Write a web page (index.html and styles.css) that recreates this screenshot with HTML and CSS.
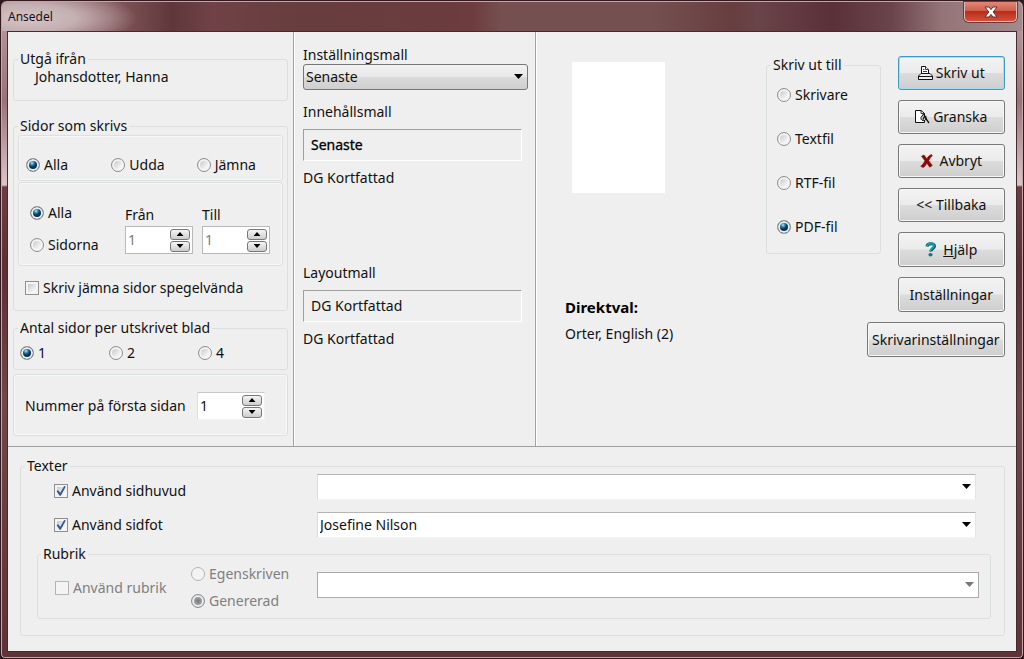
FILE: index.html
```html
<!DOCTYPE html>
<html lang="sv">
<head>
<meta charset="utf-8">
<title>Ansedel</title>
<link rel="stylesheet" href="styles.css">
</head>
<body>
<form class="window">
  <header class="titlebar">
    <h1 class="title">Ansedel</h1>
    <button type="button" class="close" aria-label="Stäng">
      <svg width="14" height="12" viewBox="0 0 14 12"><path d="M1 1h4l2 2.600L9 1h4L9.200 6 13 11H9L7 8.400 5 11H1l3.800-5z" fill="#fff" stroke="#5a3038" stroke-width="1"/></svg>
    </button>
  </header>
  <main class="client">
    <div class="upper">
      <section class="pane pages">
        <fieldset class="group source">
          <legend>Utgå ifrån</legend>
          <p>Johansdotter, Hanna</p>
        </fieldset>
        <fieldset class="group printed">
          <legend>Sidor som skrivs</legend>
          <div class="group parity">
            <label class="option"><input type="radio" name="parity" checked>Alla</label>
            <label class="option"><input type="radio" name="parity">Udda</label>
            <label class="option"><input type="radio" name="parity">Jämna</label>
          </div>
          <div class="group range">
            <div class="range-options">
              <label class="option"><input type="radio" name="range" checked>Alla</label>
              <label class="option"><input type="radio" name="range">Sidorna</label>
            </div>
            <div class="range-field">
              <label for="from">Från</label>
              <div class="spinner"><input id="from" type="number" value="1" disabled><div class="steps"><button type="button" class="step up" aria-label="Öka"></button><button type="button" class="step down" aria-label="Minska"></button></div></div>
            </div>
            <div class="range-field">
              <label for="to">Till</label>
              <div class="spinner"><input id="to" type="number" value="1" disabled><div class="steps"><button type="button" class="step up" aria-label="Öka"></button><button type="button" class="step down" aria-label="Minska"></button></div></div>
            </div>
          </div>
          <label class="option mirror"><input type="checkbox">Skriv jämna sidor spegelvända</label>
        </fieldset>
        <fieldset class="group sheets">
          <legend>Antal sidor per utskrivet blad</legend>
          <div class="sheet-options">
            <label class="option"><input type="radio" name="sheets" checked>1</label>
            <label class="option"><input type="radio" name="sheets">2</label>
            <label class="option"><input type="radio" name="sheets">4</label>
          </div>
        </fieldset>
        <div class="group first">
          <label for="first">Nummer på första sidan</label>
          <div class="spinner plain"><input id="first" type="number" value="1"><div class="steps"><button type="button" class="step up" aria-label="Öka"></button><button type="button" class="step down" aria-label="Minska"></button></div></div>
        </div>
      </section>

      <section class="pane templates">
        <label for="template">Inställningsmall</label>
        <div class="combo raised"><select id="template"><option>Senaste</option></select></div>
        <h2 class="heading">Innehållsmall</h2>
        <p class="sunken strong">Senaste</p>
        <p class="current">DG Kortfattad</p>
        <h2 class="heading layout">Layoutmall</h2>
        <p class="sunken">DG Kortfattad</p>
        <p class="current">DG Kortfattad</p>
      </section>

      <section class="pane output">
        <div class="preview">
          <div class="paper"></div>
          <h2 class="quick">Direktval:</h2>
          <p>Orter, English (2)</p>
        </div>
        <fieldset class="group target">
          <legend>Skriv ut till</legend>
          <div class="targets">
            <label class="option"><input type="radio" name="target">Skrivare</label>
            <label class="option"><input type="radio" name="target">Textfil</label>
            <label class="option"><input type="radio" name="target">RTF-fil</label>
            <label class="option"><input type="radio" name="target" checked>PDF-fil</label>
          </div>
        </fieldset>
        <div class="actions">
          <button type="submit" class="button default"><svg width="15" height="15" viewBox="0 0 15 15" fill="#fff" stroke="#111"><path d="M3.500 8.500V.5h4l3 3v5z"/><path d="M7.500.5v3h3M5 3.500h1.500M5 5.500h4" stroke-width=".8"/><path d="M3 7.500L.5 10v3.500h14V10L12 7.500z" fill="#eee"/><path d="M.5 10.500h14M4 7.500h7"/></svg>Skriv ut</button>
          <button type="button" class="button"><svg width="15" height="15" viewBox="0 0 15 15" fill="none" stroke="#111"><path fill="#fff" d="M.5.500h5.500l3.500 3v9h-9z"/><path d="M6 .5v3h3.500" stroke-width=".8"/><path d="M8.500 4L6 7.500c-1 3 4 4.500 5 1.500z" fill="#c5cccc"/><path d="M8 9.500l2-4M10.500 6l1 3.500 2.500 3.500" stroke-width="1.300"/></svg>Granska</button>
          <button type="button" class="button"><svg class="wide" width="13" height="14" viewBox="0 0 13 14"><path d="M1.500 2.200L4 1l2.800 3.700C8.200 2.500 9.500 1.200 11.500.5l.8 1.300C10.800 3 9.600 4.700 8.700 6.700l3.600 4.800-2.600 1.700-2.800-4C5.500 11.300 4.400 13 3.200 13.500L.7 12.300C2.500 11 4 9 4.900 6.800z" fill="#8b0808" stroke="#8b0808" stroke-width=".6"/></svg>Avbryt</button>
          <button type="button" class="button">&lt;&lt; Tillbaka</button>
          <button type="button" class="button"><svg class="wide" width="12" height="15" viewBox="0 0 12 15"><path d="M2 4.500C2.300 1 9.500.8 9.500 4.200c0 2.300-3.500 2.400-3.700 5.300" fill="none" stroke="#075a68" stroke-width="3"/><path d="M2 4C2.500.8 9 .6 9 3.800c0 2.200-3.500 2.500-3.700 5.200" fill="none" stroke="#12a0ae" stroke-width="1.800"/><ellipse cx="5.500" cy="12.800" rx="2.100" ry="1.700" fill="#087987"/></svg><span><u>H</u>jälp</span></button>
          <button type="button" class="button">Inställningar</button>
          <button type="button" class="button long">Skrivarinställningar</button>
        </div>
      </section>
    </div>

    <section class="lower">
      <fieldset class="group texts">
        <legend>Texter</legend>
        <div class="text-row head">
          <label class="option"><input type="checkbox" checked>Använd sidhuvud</label>
          <div class="combo"><select aria-label="Sidhuvud"><option></option></select></div>
        </div>
        <div class="text-row">
          <label class="option"><input type="checkbox" checked>Använd sidfot</label>
          <div class="combo"><select aria-label="Sidfot"><option>Josefine Nilson</option></select></div>
        </div>
        <fieldset class="group title-group" disabled>
          <legend>Rubrik</legend>
          <div class="title-row">
            <label class="option"><input type="checkbox">Använd rubrik</label>
            <div class="title-kinds">
              <label class="option"><input type="radio" name="kind">Egenskriven</label>
              <label class="option"><input type="radio" name="kind" checked>Genererad</label>
            </div>
            <div class="combo off"><select aria-label="Rubrik"><option></option></select></div>
          </div>
        </fieldset>
      </fieldset>
    </section>
  </main>
</form>
</body>
</html>
```
FILE: styles.css
```css
* { box-sizing: border-box; }
html { background: #2b1c22; }
body {
  margin: 0;
  font: 14px/18px "Noto Sans", "Open Sans", sans-serif;
  color: #111;
}
h1, h2, p { margin: 0; font: inherit; }
button, input, select { font: inherit; color: inherit; margin: 0; }

.window {
  display: flex;
  flex-direction: column;
  min-height: 100vh;
  padding: 0 7px 6px;
  border: 1px solid #33191d;
  border-radius: 7px 7px 5px 5px;
  box-shadow: inset 0 0 0 1px #c3a6a8;
  background: linear-gradient(#b9a0a3 0, #987479 100px, #d9c6c9 184px, #6d3c42 186px, #5d3036 270px, #70474a 400px, #5f3237 100%);
}
.titlebar {
  display: flex;
  justify-content: space-between;
  align-items: flex-start;
  height: 29px;
  margin: 1px -6px 0;
  padding: 0 5px 0 6px;
  border-radius: 6px 6px 0 0;
  background:
    radial-gradient(ellipse 110px 30px at 25px 16px, #d5c5c8 0, #c4afb2 45%, transparent 100%),
    linear-gradient(90deg, #a08287 0, #84585b 110px, #5f373b 170px, #704247 210px, #673d3d 300px, #6c3c3e 470px, #765050 500px, #755050 650px, #683e3f 730px, #694448 755px, #5b3039 830px, #6a454b 890px, #947477 940px, #a3898d 100%);
}
.title { font-size: 12px; padding-top: 6px; color: #1c1014; }
.close {
  display: grid;
  place-items: center;
  width: 53px;
  height: 20px;
  padding: 0;
  border: 1px solid #e3b9b5;
  border-top: 0;
  border-radius: 0 0 5px 5px;
  background: linear-gradient(#e2897a, #d05f4c 45%, #b92c18 50%, #d5503a);
  box-shadow: 0 0 0 1px #6b3a3e;
}

.client {
  flex: 1;
  display: flex;
  flex-direction: column;
  border: 1px solid #4a292c;
  background: #efefef;
  margin: 0 -1px 0;
}
.upper {
  display: grid;
  grid-template-columns: 285fr 242fr 481fr;
  border-bottom: 1px solid #a0a0a0;
}
.pane + .pane { border-left: 1px solid #a3a3a3; box-shadow: inset 1px 0 #fff; }

.group {
  min-width: 0;
  margin: 0;
  padding: 0;
  border: 1px solid #dcdfe0;
  border-radius: 3px;
  box-shadow: inset 0 0 0 1px #f7f7f7;
}
fieldset.group { box-shadow: none; }
legend { margin-left: 4px; padding: 0 2px; }

.option { display: flex; align-items: center; gap: 4px; white-space: nowrap; }
.option input {
  appearance: none;
  flex: none;
  width: 14px;
  height: 14px;
  border: 1px solid #8e8f8f;
  background: linear-gradient(135deg, #b9bdc0, #f8f8f8 75%);
  box-shadow: inset 0 0 0 2px #f4f4f4;
}
.option input[type="radio"] { border-radius: 50%; }
.option input[type="radio"]:checked {
  background: radial-gradient(circle at 5px 4px, #b7e8f8 0, #2c85ad 2px, #0c3350 4px, #0c3350 5px);
  box-shadow: inset 0 0 0 2px #e9eef1;
}
.option input[type="checkbox"]:checked {
  display: grid;
  place-items: center;
}
.option input[type="checkbox"]:checked::after {
  content: "";
  width: 10px;
  height: 10px;
  background: #39559b;
  clip-path: polygon(5% 50%, 22% 42%, 42% 68%, 82% 0, 98% 6%, 48% 98%, 36% 98%);
}

/* page selection */
.pages { padding: 18px 5px 10px; }
.source p { padding: 0 0 14px 21px; }
.printed { margin-top: 16px; padding: 0 4px 13px; }
.printed legend { margin-left: 0; }
.parity {
  display: grid;
  grid-template-columns: repeat(3, 1fr);
  padding: 20px 0 6px 7px;
}
.range {
  display: flex;
  gap: 9px;
  margin-top: 1px;
  padding: 21px 12px 11px 11px;
}
.range-options { display: grid; gap: 14px; flex: 1; }
.range-field { padding-top: 2px; }
.range-field label { display: block; margin-bottom: 2px; }
.mirror { margin: 13px 0 0 7px; }
.spinner {
  display: flex;
  align-items: center;
  width: 68px;
  height: 28px;
  padding-right: 2px;
  border: 1px solid #b9b9b9;
  background: #fff;
}
.spinner.plain { border-color: #c8c8c8 #f2f2f2 #f2f2f2 #e0e0e0; }
.spinner input {
  appearance: textfield;
  flex: 1;
  min-width: 0;
  padding: 0 2px;
  border: 0;
  background: none;
}
.spinner input::-webkit-inner-spin-button { appearance: none; }
.spinner input:disabled { color: #7b7b7b; }
.steps { display: grid; gap: 1px; }
.step {
  display: grid;
  place-items: center;
  width: 20px;
  height: 11px;
  padding: 0;
  border: 1px solid #777;
  border-radius: 3px;
  background: linear-gradient(#f5f5f5, #cdcdcd);
}
.step::after {
  content: "";
  width: 7px;
  height: 4px;
  background: #000;
  clip-path: polygon(50% 0, 100% 100%, 0 100%);
}
.step.down::after { clip-path: polygon(0 0, 100% 0, 50% 100%); }
.sheets { margin-top: 8px; }
.sheet-options {
  display: grid;
  grid-template-columns: repeat(3, 1fr);
  padding: 7px 0 7px 6px;
}
.first {
  display: flex;
  align-items: center;
  justify-content: space-between;
  margin-top: 4px;
  padding: 17px 22px 15px 11px;
}

/* templates */
.templates { padding: 14px 7px 0 9px; }
.combo { position: relative; }
.combo::after {
  content: "";
  position: absolute;
  top: 10px;
  right: 5px;
  width: 9px;
  height: 5px;
  background: #000;
  clip-path: polygon(0 0, 100% 0, 50% 100%);
  pointer-events: none;
}
.combo select {
  appearance: none;
  display: block;
  width: 100%;
  height: 26px;
  padding: 0 20px 0 2px;
  border: 1px solid;
  border-color: #b4b4b4 #e4e4e4 #f4f4f4 #dcdcdc;
  border-radius: 0;
  background: #fff;
  opacity: 1;
}
.combo.raised select {
  border-color: #777;
  border-radius: 3px;
  background: linear-gradient(#f2f2f2, #e8e8e8 50%, #dadada 52%, #cfcfcf);
}
.combo.off select { border-color: #aaa; }
.combo.off::after { background: #777; }
.heading { margin-top: 13px; }
.heading.layout { margin-top: 77px; }
.sunken {
  margin: 8px 6px 8px 0;
  padding: 6px 7px;
  border: 1px solid;
  border-color: #a0a0a0 #fff #fff #a0a0a0;
}
.strong { color: #000; -webkit-text-stroke: 0.3px #000; }

/* output */
.output { display: flex; padding: 24px 12px 0 29px; }
.preview { flex: 1; padding-top: 6px; }
.paper { width: 93px; height: 131px; margin: 0 0 105px 7px; background: #fff; }
.quick { font-size: 15px; font-weight: bold; margin-bottom: 9px; color: #000; }
.target { align-self: flex-start; width: 115px; margin-right: 17px; }
.targets { display: grid; gap: 26px; padding: 12px 0 17px 10px; }
.actions { display: grid; gap: 10px; align-content: start; width: 106px; }
.button {
  display: flex;
  align-items: center;
  justify-content: center;
  gap: 3px;
  height: 34px;
  padding: 0 4px;
  border: 1px solid #787878;
  border-radius: 3px;
  background: linear-gradient(#f3f3f3, #ebebeb 49%, #dcdcdc 51%, #cecece);
  box-shadow: inset 0 0 0 1px #f7f7f7;
  white-space: nowrap;
}
.button.default { border-color: #3c9cc4; box-shadow: inset 0 0 0 1px #a9dcf0; }
.button:nth-child(n + 5) { height: 35px; }
.button.long { margin-left: -31px; }
.button .wide { margin-right: 3px; }

/* header, footer and title texts */
.lower { padding: 10px 11px 14px 12px; }
.texts { padding: 0 13px 16px 16px; }
.texts legend { margin-left: -12px; }
.text-row {
  display: grid;
  grid-template-columns: 263px 1fr;
  align-items: center;
  margin: 12px 15px 0 17px;
}
.text-row.head { align-items: end; margin-top: -1px; }
.title-group { margin-top: 7px; padding: 0 11px 8px 17px; }
.title-group legend { margin-left: -14px; }
.title-row {
  display: grid;
  grid-template-columns: 136px 126px 1fr;
  align-items: center;
  padding-top: 2px;
}
.title-row .combo { align-self: start; margin-top: 7px; }
.title-kinds { display: grid; gap: 9px; }
.title-row .option { color: #808080; }
.title-row .option input { border-color: #b4b4b4; background: #f3f3f3; }
.title-row .option input[type="radio"]:checked {
  border-color: #909090;
  background: radial-gradient(circle, #777 0, #999 3px, #aaa 5px);
}
```
